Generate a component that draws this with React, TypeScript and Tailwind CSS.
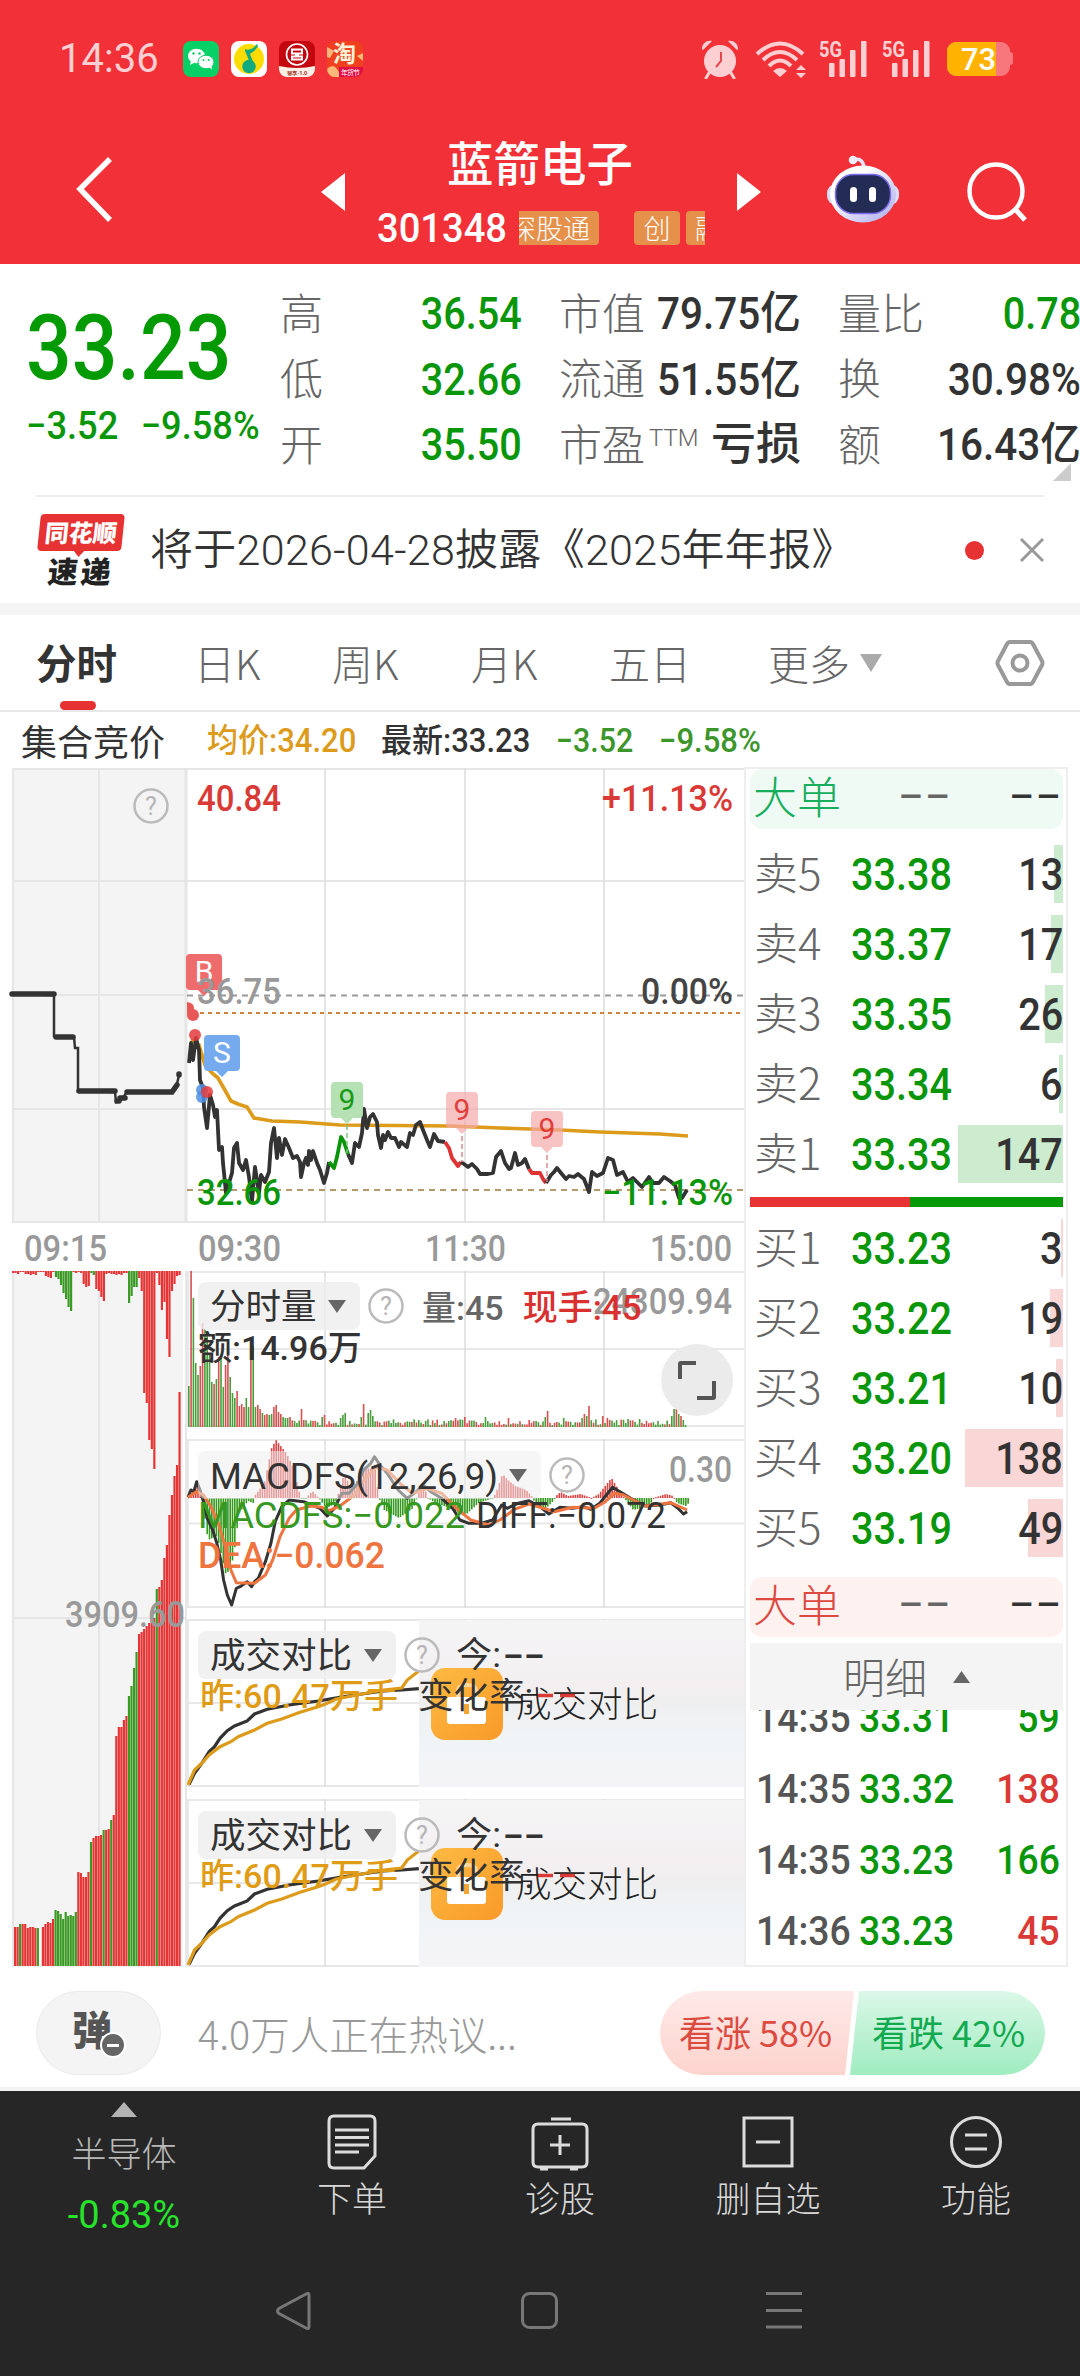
import React, { ReactNode } from 'react';
import clsx from 'clsx';

type Point = [number, number];

// DIN-like numerals, each use narrows them with its own scale-x
const NUM = 'font-["Roboto","Noto_Sans_CJK_SC",sans-serif] font-medium whitespace-nowrap';

const GREEN = '#0a960a';
const RED = '#e03434';
const INK = '#333333';

const GRID_X = [325, 465, 604];

function toPoints(points: Point[], x0: number, y0: number, sx: number, sy: number) {
  return points.map(([x, y]) => `${(x0 + x / sx).toFixed(1)},${(y0 + y / sy).toFixed(1)}`).join(' ');
}

function lerp(points: Point[], x: number) {
  for (let i = 1; i < points.length; i++) {
    const [x1, y1] = points[i];
    const [x0, y0] = points[i - 1];
    if (x <= x1) return y0 + ((y1 - y0) * (x - x0)) / (x1 - x0);
  }
  return 0;
}

function Label({ x, y, w, size = 36, fill, weight = 500, children }: {
  x: number; y: number; w: number; size?: number; fill: string; weight?: number; children: ReactNode;
}) {
  return (
    <text
      x={x}
      y={y}
      textLength={w}
      lengthAdjust="spacingAndGlyphs"
      fontSize={size}
      fontWeight={weight}
      fill={fill}
      fontFamily="Roboto, 'Noto Sans CJK SC', sans-serif"
    >
      {children}
    </text>
  );
}

/* ---------- header ---------- */

function SignalIcon() {
  return (
    <svg width="49" height="38" viewBox="0 0 49 38" fill="#fcd0d2">
      <text x="0" y="17" fontSize="22" fontWeight="700" textLength="23" lengthAdjust="spacingAndGlyphs" fontFamily="Roboto, sans-serif">5G</text>
      <rect x="10" y="23" width="5.5" height="14" rx="1" />
      <rect x="20.500" y="19" width="5.500" height="18" rx="1" />
      <rect x="31" y="10" width="5.500" height="27" rx="1" />
      <rect x="42" y="1" width="5.500" height="36" rx="1" />
    </svg>
  );
}

function StatusBar() {
  return (
    <div className="flex h-[118px] items-center pl-[59px] pr-[67px]">
      <span className='w-[124px] font-["Roboto",sans-serif] text-[40px] leading-none text-[#fcd0d2]'>14:36</span>
      <div className="flex gap-3">
        <svg width="36" height="36" viewBox="0 0 36 36">
          <rect width="36" height="36" rx="8" fill="#07d066" />
          <ellipse cx="13.500" cy="15" rx="8.500" ry="7.300" fill="#fff" />
          <path d="M8 20l-1 4 4-2z" fill="#fff" />
          <ellipse cx="23" cy="21" rx="8" ry="6.800" fill="#fff" stroke="#07d066" strokeWidth="1" />
          <path d="M26 26l3 2.500-.5-4z" fill="#fff" />
          <g fill="#07d066">
            <circle cx="10.500" cy="12.500" r="1.200" />
            <circle cx="16.500" cy="12.500" r="1.200" />
            <circle cx="20.500" cy="19" r="1" />
            <circle cx="25.700" cy="19" r="1" />
          </g>
        </svg>
        <svg width="36" height="36" viewBox="0 0 36 36">
          <rect width="36" height="36" rx="8" fill="#fff" />
          <circle cx="18" cy="18" r="15" fill="#ffdc00" />
          <path d="M14 8c3 2 8 0 12-5l1 2c-2 4-5 6-8 8l4 10-3 1-6-14z" fill="#12ab7f" />
          <circle cx="18" cy="25.500" r="6.800" fill="#12ab7f" />
        </svg>
        <svg width="36" height="36" viewBox="0 0 36 36">
          <rect width="36" height="36" rx="8" fill="#c4060f" />
          <path d="M0 25q18 4 36 0v3a8 8 0 0 1-8 8H8a8 8 0 0 1-8-8z" fill="#fdeee6" />
          <circle cx="18" cy="13.500" r="10.500" fill="none" stroke="#fff" strokeWidth="1.600" />
          <path d="M12 8.500h12M12 18.500h12M13 8.500v4h4v3h-4v3M23 8.500v4h-4v3h4v3" fill="none" stroke="#fff" strokeWidth="2" />
          <text x="8" y="33.500" fontSize="5" fontWeight="700" fill="#a3392c" textLength="20" lengthAdjust="spacingAndGlyphs">智享·1.0</text>
        </svg>
        <svg width="36" height="36" viewBox="0 0 36 36">
          <rect width="36" height="36" rx="8" fill="#f0401f" />
          <path d="M0 6l7 4-4 7-3-1zM36 12l-6 3 6 5zM0 28q6-6 10 0t4 8H8a8 8 0 0 1-8-8z" fill="#ffb878" />
          <text x="6" y="21" fontSize="23" fontWeight="700" fill="#fff2d8" fontFamily="'Noto Sans CJK SC', sans-serif">淘</text>
          <path d="M12 26h24v2a8 8 0 0 1-8 8H12z" fill="#e20b45" />
          <text x="14" y="33.500" fontSize="7" fill="#fff" textLength="19" fontFamily="'Noto Sans CJK SC', sans-serif">年货节</text>
        </svg>
      </div>

      <div className="ml-auto flex items-center">
        <svg width="38" height="40" viewBox="0 0 38 40" fill="#fcd0d2" className="mr-4">
          <circle cx="19" cy="22" r="16" />
          <path d="M8 34l-3 5M30 34l3 5" stroke="#fcd0d2" strokeWidth="3" strokeLinecap="round" />
          <path d="M1 10C1 4 6 1 11 2L2 11zM37 10C37 4 32 1 27 2l9 9z" />
          <path d="M20 13v9l-5 6" fill="none" stroke="#e8464d" strokeWidth="2" />
        </svg>
        <svg width="52" height="40" viewBox="0 0 52 40" className="mr-3">
          <g fill="none" stroke="#fcd0d2" strokeWidth="4">
            <path d="M2 15Q25-6 48 15" />
            <path d="M8 21Q25 5 42 21" />
            <path d="M14 27Q25 16 36 27" />
          </g>
          <path d="M18 32q7-6 14 0l-7 6z" fill="#fcd0d2" />
          <path d="M41 31l5-5 5 5zM41 34l5 5 5-5z" fill="#fcd0d2" />
        </svg>
        <SignalIcon />
        <span className="w-[14px]" />
        <SignalIcon />
        <svg width="66" height="34" viewBox="0 0 66 34" className="ml-4">
          <path d="M60 10h3q3 0 3 3v7q0 3-3 3h-3z" fill="#f7777d" />
          <rect width="63" height="34" rx="9" fill="#f7777d" />
          <path d="M9 0h40v34H9a9 9 0 0 1-9-9V9a9 9 0 0 1 9-9z" fill="#ffb300" />
          <text x="14" y="28" fontSize="31" fontWeight="500" fill="#fff" textLength="35" lengthAdjust="spacingAndGlyphs" fontFamily="Roboto, sans-serif">73</text>
        </svg>
      </div>
    </div>
  );
}

function Header() {
  return (
    <header className="h-[264px] bg-[#f13037]">
      <StatusBar />
      <div className="flex h-[146px] items-start text-white">
        <svg width="50" height="70" viewBox="0 0 50 70" className="ml-[70px] mt-9 shrink-0">
          <path d="M40 5L10 35l30 31" fill="none" stroke="#fff" strokeWidth="5.500" />
        </svg>
        <svg width="24" height="38" viewBox="0 0 24 38" className="ml-[201px] mt-[55px] shrink-0">
          <path d="M24 0v38L0 19z" fill="#fff" />
        </svg>
        <div className="mx-8 mt-[18px] w-[328px] shrink-0">
          <h1 className='-ml-[2px] text-center font-["Noto_Sans_CJK_SC",sans-serif] text-[46.500px] leading-[50px] font-medium'>蓝箭电子</h1>
          <div className="mt-[22px] flex h-[40px] items-center">
            <span className={clsx(NUM, 'w-[142px] shrink-0 origin-left scale-x-[0.93] text-[41px] leading-none')}>301348</span>
            <div className='flex h-[34px] w-[187px] overflow-hidden font-["Noto_Sans_CJK_SC",sans-serif] text-[27px] leading-[33px] font-light'>
              <span className="flex w-[80px] shrink-0 justify-end rounded-r bg-[#e5904b] pr-[9px] whitespace-nowrap">深股通</span>
              <span className="ml-[35px] w-[46px] shrink-0 rounded bg-[#e5904b] text-center">创</span>
              <span className="ml-[6px] w-[46px] shrink-0 rounded bg-[#e5904b] pl-[9px]">融</span>
            </div>
          </div>
        </div>
        <svg width="24" height="38" viewBox="0 0 24 38" className="mt-[55px] shrink-0">
          <path d="M0 0v38l24-19z" fill="#fff" />
        </svg>
        <svg width="74" height="68" viewBox="0 0 74 68" className="ml-[65px] mt-[37px] shrink-0">
          <defs>
            <linearGradient id="shell" x1="0" y1="0" x2="1" y2="1">
              <stop offset="0.300" stopColor="#fff" />
              <stop offset="1" stopColor="#a9a9ec" />
            </linearGradient>
          </defs>
          <path d="M27 5Q37 2 38 13" fill="none" stroke="#e9e6fb" strokeWidth="3.500" />
          <circle cx="27" cy="5" r="4.300" fill="#efeefc" />
          <rect x="1" y="29" width="72" height="21" rx="9" fill="#dcdcf8" />
          <ellipse cx="37" cy="39" rx="33" ry="28.500" fill="url(#shell)" />
          <rect x="9.500" y="19.500" width="55" height="39" rx="18" fill="#222c54" stroke="#7d6cf0" strokeWidth="1.500" />
          <rect x="24" y="32" width="7" height="15" rx="3.500" fill="#fff" />
          <rect x="43" y="32" width="7" height="15" rx="3.500" fill="#fff" />
        </svg>
        <svg width="64" height="64" viewBox="0 0 64 64" className="ml-[65px] mt-[42px] shrink-0" fill="none" stroke="#fff" strokeWidth="4.500">
          <circle cx="31" cy="31" r="26.500" />
          <path d="M50 49l10 11" strokeWidth="5" />
        </svg>
      </div>
    </header>
  );
}

/* ---------- quote ---------- */

function Quote() {
  const columns = [
    { cls: 'ml-[20px] w-[242px]', rows: [['高', '36.54', true], ['低', '32.66', true], ['开', '35.50', true]] },
    { cls: 'ml-[37px] w-[242px]', rows: [['市值', '79.75亿', false], ['流通', '51.55亿', false], ['市盈', '亏损', false]] },
    { cls: 'ml-[37px] w-[243px]', rows: [['量比', '0.78', true], ['换', '30.98%', false], ['额', '16.43亿', false]] },
  ] as const;

  return (
    <section className="relative flex h-[231px] pt-[17px]">
      <div className="w-[260px] shrink-0 pl-[26px] pt-[29px] text-[#0a960a]">
        <div className={clsx(NUM, 'origin-left scale-x-[0.885] text-[91px] leading-[76px] text-[#039a03]')}>33.23</div>
        <div className={clsx(NUM, 'mt-[16px] flex origin-left scale-x-[0.93] gap-[24px] text-[39px] leading-[48px]')}>
          <span>−3.52</span>
          <span>−9.58%</span>
        </div>
      </div>
      {columns.map(col => (
        <div key={col.cls} className={clsx('shrink-0', col.cls)}>
          {col.rows.map(([label, value, green]) => (
            <div key={label} className="flex h-[65.5px] items-center justify-between">
              <span className='flex shrink-0 pb-[5px] font-["Noto_Sans_CJK_SC",sans-serif] text-[43px] leading-none font-light whitespace-nowrap text-[#666]'>
                {label}
                {label === '市盈' && (
                  <sup className='top-0 mt-[5px] ml-[4px] font-["Roboto",sans-serif] text-[24px] leading-none'>TTM</sup>
                )}
              </span>
              <span
                className={clsx(
                  NUM,
                  'text-[45px] leading-none',
                  value.endsWith('亿') && '-ml-6 origin-right scale-x-[0.9]',
                  /\d$/.test(value) && 'origin-right scale-x-[0.88]',
                  value.endsWith('%') && 'origin-right scale-x-[0.9]',
                  green ? 'text-[#0a960a]' : 'text-[#333]',
                )}
              >
                {value}
              </span>
            </div>
          ))}
        </div>
      ))}
      <svg width="18" height="18" className="absolute left-[1053px] top-[199px]">
        <path d="M18 0v18H0z" fill="#ccc" />
      </svg>
    </section>
  );
}

function Notice() {
  return (
    <section className="mx-9 flex h-[108px] items-center border-t-2 border-[#eee]">
      <div className='ml-[3px] w-[84px] shrink-0 font-["Noto_Sans_CJK_SC",sans-serif] font-black'>
        <div className="relative h-[37px] -skew-x-6 rounded bg-[#e63232] text-center text-[24px] leading-[36px] text-white">
          同花顺
          <svg width="12" height="7" className="absolute left-[36px] top-[36px]">
            <path d="M0 0h12l-6 7z" fill="#e63232" />
          </svg>
        </div>
        <div className="mt-[4px] h-[32px] -skew-x-6 text-center text-[30px] leading-[30px] tracking-[3px] text-[#222]">速递</div>
      </div>
      <p className='ml-[27px] flex-1 font-["Roboto","Noto_Sans_CJK_SC",sans-serif] text-[43px] font-[350] tracking-[0.3px] whitespace-nowrap text-[#333]'>将于2026-04-28披露《2025年年报》</p>
      <span className="h-[19px] w-[19px] rounded-full bg-[#e63232]" />
      <svg width="26" height="26" viewBox="0 0 26 26" className="-mr-[1px] ml-[35px] shrink-0" stroke="#999" strokeWidth="3">
        <path d="M2 2l22 22M24 2L2 24" />
      </svg>
    </section>
  );
}

function Tabs() {
  const tabs = [
    { label: '日K', cls: 'ml-[76px] w-[62px]' },
    { label: '周K', cls: 'ml-[76px] w-[66px]' },
    { label: '月K', cls: 'ml-[73px] w-[66px]' },
    { label: '五日', cls: 'ml-[72px] w-[80px]' },
    { label: '更多', cls: 'ml-[79px] w-[80px]' },
  ];
  return (
    <nav className='flex h-[97px] border-b-2 border-[#e8e8e8] pl-9 font-["Noto_Sans_CJK_SC",sans-serif] text-[41px] leading-[94px] font-light text-[#666]'>
      <div className="relative w-[82px] text-[40.500px] font-bold text-[#333]">
        分时
        <span className="absolute bottom-0 left-[24px] h-[9px] w-[36px] rounded-full bg-[#e63232]" />
      </div>
      {tabs.map(tab => (
        <div key={tab.label} className={clsx('whitespace-nowrap', tab.cls)}>{tab.label}</div>
      ))}
      <svg width="22" height="18" className="mt-[39px] ml-[12px]">
        <path d="M0 0h22L11 18z" fill="#aaa" />
      </svg>
      <svg width="50" height="48" viewBox="0 0 50 48" className="mt-[24px] ml-[113px]" fill="none" stroke="#999" strokeWidth="4">
        <path d="M15 3h20q2 0 3 2l9 17q1 2 0 4l-9 17q-1 2-3 2H15q-2 0-3-2L3 26q-1-2 0-4l9-17q1-2 3-2z" />
        <circle cx="25" cy="24" r="7.500" />
      </svg>
    </nav>
  );
}

function InfoLine() {
  return (
    <div className='flex h-[55px] items-center pt-[2px] pl-[21px] font-["Noto_Sans_CJK_SC",sans-serif] text-[#333]'>
      <span className="w-[186px] pb-[2px] text-[36px] leading-none">集合竞价</span>
      <span className={clsx(NUM, 'w-[174px] origin-left scale-x-[0.94] text-[33px] leading-none text-[#dd9b1c]')}>均价:34.20</span>
      <span className={clsx(NUM, 'w-[175px] origin-left scale-x-[0.94] text-[33px] leading-none')}>最新:33.23</span>
      <span className={clsx(NUM, 'w-[103px] origin-left scale-x-[0.92] text-[33px] leading-none text-[#3c962c]')}>−3.52</span>
      <span className={clsx(NUM, 'origin-left scale-x-[0.94] text-[33px] leading-none text-[#3c962c]')}>−9.58%</span>
    </div>
  );
}

/* ---------- charts ---------- */

const PRE_LINE: Point[] = [
  [10, 994], [54, 995], [54, 1036], [74, 1037], [75, 1048], [78, 1048], [78, 1091], [115, 1092], [116, 1102],
  [122, 1099], [127, 1092], [172, 1091], [177, 1084], [179, 1075],
];

const AVG_LINE: Point[] = [
  [191, 1040], [199, 1045], [205, 1065], [212, 1073], [218, 1078], [226, 1092], [231, 1101], [238, 1104], [247, 1107],
  [254, 1118], [272, 1121], [300, 1122], [340, 1125], [450, 1126], [500, 1128], [560, 1130], [600, 1132], [660, 1134], [688, 1136],
];

const PRICE_PARTS: { color: string; points: Point[] }[] = [
  {
    color: INK,
    points: [
      [189, 1063], [191, 1043], [193, 1060], [196, 1038], [199, 1050], [200, 1080], [203, 1088], [204, 1107], [207, 1128],
      [210, 1095], [213, 1105], [215, 1117], [217, 1110], [219, 1150], [222, 1147], [223, 1163], [226, 1193], [232, 1173],
      [234, 1148], [237, 1143], [239, 1163], [243, 1170], [246, 1160], [249, 1177], [252, 1201], [255, 1167], [259, 1193],
      [261, 1175], [265, 1182], [269, 1172], [271, 1143], [274, 1128], [277, 1158], [279, 1138], [282, 1155], [285, 1139],
      [289, 1148], [293, 1158], [297, 1156], [300, 1162], [301, 1177], [304, 1163], [306, 1158], [308, 1165], [309, 1151],
      [311, 1160], [313, 1151], [317, 1163], [320, 1170], [324, 1183], [327, 1173], [329, 1162],
    ],
  },
  { color: GREEN, points: [[329, 1162], [334, 1168], [337, 1157], [341, 1137], [344, 1142], [348, 1154]] },
  {
    color: INK,
    points: [
      [348, 1154], [352, 1163], [355, 1143], [359, 1147], [362, 1133], [364, 1109], [367, 1128], [370, 1117], [373, 1114],
      [377, 1122], [378, 1135], [381, 1148], [383, 1135], [385, 1140], [388, 1132], [391, 1138], [395, 1138], [399, 1147],
      [401, 1142], [407, 1147], [410, 1133], [413, 1135], [416, 1125], [420, 1122], [423, 1130], [427, 1140], [430, 1147],
      [434, 1134], [438, 1141], [445, 1142],
    ],
  },
  { color: RED, points: [[445, 1142], [449, 1148], [452, 1158], [458, 1166], [461, 1162]] },
  {
    color: INK,
    points: [
      [461, 1162], [464, 1164], [468, 1167], [472, 1164], [477, 1169], [480, 1174], [488, 1174], [493, 1173], [496, 1157],
      [501, 1151], [505, 1163], [509, 1169], [511, 1168], [515, 1153], [518, 1165], [522, 1163], [525, 1159], [529, 1169],
    ],
  },
  { color: RED, points: [[529, 1169], [532, 1173], [540, 1173], [543, 1179], [546, 1183]] },
  {
    color: INK,
    points: [
      [546, 1183], [551, 1175], [554, 1172], [557, 1168], [561, 1173], [566, 1179], [569, 1176], [574, 1177], [578, 1174],
      [584, 1179], [589, 1192], [592, 1172], [597, 1176], [603, 1173], [608, 1158], [613, 1160], [617, 1175], [623, 1172],
      [628, 1182], [633, 1178], [642, 1187], [649, 1177], [653, 1183], [659, 1183], [664, 1177], [670, 1181], [675, 1185],
      [679, 1198], [682, 1198], [687, 1190],
    ],
  },
];

function Marker({ x, y, w, text, fill, color }: { x: number; y: number; w: number; text: string; fill: string; color: string }) {
  const cx = x + w / 2;
  return (
    <g>
      <path
        d={`M${x + 4} ${y}h${w - 8}q4 0 4 4v28q0 4-4 4H${cx + 6}l-6 6-6-6H${x + 4}q-4 0-4-4v-28q0-4 4-4z`}
        fill={fill}
      />
      <text x={cx} y={y + 28} textAnchor="middle" fontSize="30" fill={color} fontFamily="Roboto, sans-serif">{text}</text>
    </g>
  );
}

function QuestionMark({ cx, cy }: { cx: number; cy: number }) {
  return (
    <g>
      <circle cx={cx} cy={cy} r="16.500" fill="none" stroke="#bbb" strokeWidth="2.500" />
      <text x={cx} y={cy + 9} textAnchor="middle" fontSize="25" fill="#b5b5b5" fontFamily="Roboto, sans-serif">?</text>
    </g>
  );
}

function PriceChart() {
  return (
    <svg width="744" height="504" viewBox="0 767 744 504" className="block">
      <rect x="12" y="768" width="174" height="454" fill="#f4f4f4" />
      <g stroke="#e6e6e6" strokeWidth="2">
        <path d="M12 769H744M12 881H744M12 1109H744M12 1222H744M13 768V1222M99 768V1222M12 995H186" />
        <path d="M186 768V1222" strokeWidth="3" />
        {GRID_X.map(x => <path key={x} d={`M${x} 768V1222`} stroke="#ddd" strokeWidth="1.500" />)}
      </g>
      <QuestionMark cx={151} cy={806} />
      <Label x={197} y={811} w={84} fill="#d93a36">40.84</Label>
      <Label x={602} y={811} w={131} fill="#d93a36">+11.13%</Label>

      <polyline points={toPoints(PRE_LINE, 0, 0, 1, 1)} fill="none" stroke={INK} strokeWidth="2.500" />
      <g stroke={INK} strokeWidth="5.500" strokeLinecap="round">
        <path d="M12 994H54M56 1037H73M79 1091H115M117 1101H119M120 1098H125M127 1092H172L177 1085M179 1074V1075" fill="none" />
      </g>

      <path d="M187 995.500H744" stroke="#999" strokeWidth="2" strokeDasharray="6 5" />
      <path d="M200 1013H744" stroke="#d4823a" strokeWidth="2" strokeDasharray="4 4" />
      <path d="M187 1190H744" stroke="#b79a6c" strokeWidth="2" strokeDasharray="6 5" />

      <polyline points={toPoints(AVG_LINE, 0, 0, 1, 1)} fill="none" stroke="#dd9b1c" strokeWidth="3.600" />
      {PRICE_PARTS.map((part, i) => (
        <polyline key={i} points={toPoints(part.points, 0, 0, 1, 1)} fill="none" stroke={part.color} strokeWidth="3.800" strokeLinejoin="round" />
      ))}

      <Marker x={186} y={954} w={36} text="B" fill="#ee6c6c" color="#fff" />
      <Marker x={204} y={1035} w={36} text="S" fill="#75abee" color="#fff" />
      <g opacity="0.950">
        <Marker x={331} y={1082} w={32} text="9" fill="#b2e0b1" color="#0a960a" />
        <Marker x={446} y={1092} w={32} text="9" fill="#f5a9a9bb" color="#e03434" />
        <Marker x={531} y={1111} w={32} text="9" fill="#f5a9a9bb" color="#e03434" />
      </g>
      <path d="M347 1125V1153" stroke="#7fc47f" strokeWidth="1.500" strokeDasharray="5 3" />
      <path d="M462 1136V1162M547 1155V1182" stroke="#dc8c8c" strokeWidth="1.500" strokeDasharray="5 3" />
      <g fill="#e63c3c" opacity="0.850">
        <path d="M187 1002q7 1 7 6t-7 6z" />
        <circle cx="193" cy="1015" r="6" />
        <circle cx="195" cy="1035" r="6" />
      </g>
      <circle cx="202" cy="1090" r="6" fill="#4f8fe6" opacity="0.850" />
      <circle cx="202" cy="1097" r="6" fill="#4f8fe6" opacity="0.850" />
      <circle cx="207" cy="1092" r="6" fill="#e63c3c" opacity="0.850" />

      <Label x={197} y={1004} w={84} fill="#999">36.75</Label>
      <Label x={641} y={1004} w={92} fill="#444">0.00%</Label>
      <Label x={197} y={1205} w={84} fill={GREEN}>32.66</Label>
      <Label x={602} y={1205} w={131} fill={GREEN}>−11.13%</Label>

      <Label x={24} y={1261} w={83} fill="#999">09:15</Label>
      <Label x={198} y={1261} w={83} fill="#999">09:30</Label>
      <Label x={425} y={1261} w={81} fill="#999">11:30</Label>
      <Label x={650} y={1261} w={82} fill="#999">15:00</Label>
    </svg>
  );
}

// "r"/"g" runs of unmatched volume before the open, in px
const AUCTION_TOP: [string, number[]][] = [
  ['r', [2, 2, 3, 1, 1, 3, 3, 4, 3, 4]],
  ['r', [1, 1, 1, 5, 6, 7, 1]],
  ['g', [6, 8, 14, 22, 28, 36, 40]],
  ['r', [1, 2, 1, 2, 13, 16, 15]],
  ['g', [2, 4]],
  ['r', [18, 20, 26, 30, 3, 2, 3, 3, 4, 3, 4, 2, 2]],
  ['g', [32, 25, 16, 16]],
  ['r', [7, 20, 122, 132, 169, 178, 198, 2, 14, 39, 31, 68, 86, 20, 13, 5, 4]],
];

const AUCTION_BOTTOM: [string, number[]][] = [
  ['r', [39, 39]],
  ['g', [42]],
  ['r', [42, 42, 38, 39, 39, 38]],
  ['g', [38, 0]],
  ['r', [39, 42, 44, 43, 47]],
  ['g', [56, 55, 52, 47, 54, 50, 51, 50, 54]],
  ['r', [94, 93, 89, 89, 94]],
  ['g', [124]],
  ['r', [128, 130, 130, 131]],
  ['g', [136]],
  ['r', [136, 137]],
  ['g', [146]],
  ['r', [151, 230, 239, 239, 246, 250]],
  ['g', [270, 280, 298, 314]],
  ['r', [332, 334, 337, 340, 343, 346, 348]],
  ['g', [377]],
  ['r', [379, 386, 408, 421, 451, 471, 490, 501, 574]],
];

function expand(runs: [string, number[]][]) {
  return runs.flatMap(([kind, values]) => values.map(v => ({ color: kind === 'r' ? '#e63434' : '#3a9a24', v })));
}

function AuctionVolume() {
  const top = expand(AUCTION_TOP);
  const bottom = expand(AUCTION_BOTTOM);
  const stepTop = 169 / top.length;
  const stepBottom = 167 / bottom.length;
  return (
    <svg width="187" height="696" viewBox="0 1271 187 696" className="block shrink-0">
      <rect x="12" y="1271" width="171" height="696" fill="#f4f4f4" />
      <path d="M13 1271V1967M99 1271V1967M12 1618H186M186 1271V1967" stroke="#e6e6e6" strokeWidth="2" />
      {top.map((bar, i) => (
        <rect key={i} x={12 + i * stepTop} y="1271" width={stepTop - 0.35} height={bar.v} fill={bar.color} />
      ))}
      {bottom.map((bar, i) => (
        <rect key={i} x={14 + i * stepBottom} y={1966 - bar.v} width={stepBottom - 0.35} height={bar.v} fill={bar.color} />
      ))}
      <Label x={65} y={1627} w={120} fill="#999999">3909.60</Label>
    </svg>
  );
}

function PanelGrid({ h }: { h: number }) {
  return (
    <g stroke="#e8e8e8" strokeWidth="2">
      <path d={`M0 1H557M0 ${h / 2}H557M0 ${h - 1}H557M1 0V${h}`} />
      {GRID_X.map(x => <path key={x} d={`M${x - 187} 0V${h}`} stroke="#ddd" strokeWidth="1.500" />)}
    </g>
  );
}

function PanelSelect({ label, cls }: { label: string; cls: string }) {
  return (
    <div className={clsx('flex h-[48px] items-center justify-between rounded-lg bg-[#eeeeeecc] pl-[12px] pr-[14px] font-["Roboto","Noto_Sans_CJK_SC",sans-serif] text-[35.5px] leading-none whitespace-nowrap text-[#333]', cls)}>
      <span className="pt-[4px]">{label}</span>
      <svg width="18" height="13">
        <path d="M0 0h18L9 13z" fill="#666" />
      </svg>
    </div>
  );
}

function HelpIcon({ className }: { className?: string }) {
  return (
    <svg width="36" height="36" className={clsx('shrink-0', className)}>
      <QuestionMark cx={18} cy={18} />
    </svg>
  );
}

// first half hour is traded heavily, the rest of the day stays thin
const VOLUME_OPEN = [
  41, 156, 129, 64, 52, 61, 104, 98, 93, 73, 45, 43, 48, 70, 73, 40, 62, 80, 50, 34, 29, 36, 21, 23, 20, 29, 20,
  78, 81, 20, 22, 18, 14, 12, 13, 12, 13, 20, 22, 15, 13, 10, 9, 9, 10,
];
const VOLUME_OPEN_COLORS = 'grgggrrggggrgrggrrgggrrrrggrggrrgrrggrrrrggg';
const VOLUME_PEAKS: Record<number, number> = {
  49: 18, 58: 10, 59: 12, 66: 9, 67: 12, 68: 14, 75: 10, 76: 23, 78: 14, 79: 17, 80: 11, 100: 7, 116: 9, 120: 10,
  129: 10, 139: 9, 155: 10, 156: 16, 163: 9, 171: 9, 172: 13, 173: 11, 174: 21, 180: 11, 182: 9, 191: 8, 196: 8,
  210: 11, 211: 18, 212: 18, 213: 13, 214: 11, 215: 7, 216: 2,
};

function VolumeBars() {
  const bars = [];
  for (let i = 0; i < 217; i++) {
    const noise = (i * 37 + ((i * i) % 23) * 11) % 29;
    const v = VOLUME_OPEN[i] ?? VOLUME_PEAKS[i] ?? 2 + noise / 5;
    const green = VOLUME_OPEN_COLORS[i] ? VOLUME_OPEN_COLORS[i] === 'g' : noise % 2 === 0;
    bars.push(
      <rect key={i} x={1 + i * 2.3} y={156 - v} width="1.600" height={v} fill={green ? '#489e3b' : '#d94f4f'} />,
    );
  }
  return <g>{bars}</g>;
}

function VolumePanel() {
  return (
    <div className="relative h-[156px]">
      <svg width="557" height="156" className="block">
        <PanelGrid h={156} />
        <VolumeBars />
        <Label x={406} y={43} w={139} fill="#999">24309.94</Label>
      </svg>
      <div className="absolute inset-0 pl-[11px] pt-[11px]">
        <div className="flex h-[48px] items-center">
          <PanelSelect label="分时量" cls="w-[162px]" />
          <HelpIcon className="ml-[8px]" />
          <span className={clsx(NUM, 'ml-[18px] pt-[4px] text-[34px] leading-none text-[#666]')}>量:45</span>
          <span className={clsx(NUM, 'ml-[19px] pt-[4px] text-[35px] leading-none text-[#d93030]')}>现手:45</span>
        </div>
        <div className={clsx(NUM, 'text-[34px] leading-[37px] text-[#333]')}>额:14.96万</div>
      </div>
      <svg width="557" height="156" className="absolute inset-0">
        <circle cx="510" cy="109" r="36" fill="#ebebeb" />
        <path d="M493 108V93q0-1 1-1h15M527 110v16q0 1-1 1h-16" fill="none" stroke="#555" strokeWidth="4" />
      </svg>
    </div>
  );
}

const MACD_BARS: Point[] = [
  [20, 0], [35, 8], [45, 14], [55, 3], [60, -5], [75, -42], [100, -38], [125, -78], [145, -60], [160, -15], [185, -3],
  [200, -5], [205, 3], [230, 15], [250, 50], [262, 58], [290, 45], [310, 30], [330, 0], [345, 0], [362, 7], [380, 0],
  [400, -10], [425, -6], [440, 12], [450, 25], [465, 12], [480, 15], [510, 30], [535, 28], [545, 0], [560, -12],
  [600, -20], [640, -10], [655, 5], [665, 16], [680, 0], [700, -5], [740, -10], [780, -18], [820, -5], [860, 0],
  [870, 8], [885, 24], [900, 18], [920, 12], [950, 8], [965, 2], [975, -5], [1000, -12], [1025, -3], [1035, 3],
  [1045, 6], [1065, 2], [1100, 4], [1130, 0], [1150, 4], [1185, 20], [1210, 5], [1220, 0], [1245, -12], [1290, -8],
  [1300, 0], [1335, 4], [1355, 2], [1365, -5], [1390, -8], [1400, -4],
];

const DIFF_LINE: Point[] = [
  [22, 712], [30, 690], [38, 695], [46, 665], [55, 690], [65, 725], [75, 775], [90, 810], [100, 845], [112, 900],
  [120, 960], [130, 1005], [142, 1035], [155, 985], [165, 980], [185, 965], [197, 980], [205, 965], [215, 955],
  [235, 905], [250, 850], [262, 785], [280, 740], [300, 720], [340, 725], [370, 738], [385, 745], [405, 768],
  [425, 745], [445, 700], [465, 700], [490, 670], [505, 630], [525, 610], [535, 590], [550, 615], [570, 640],
  [600, 690], [625, 715], [650, 695], [668, 675], [690, 695], [720, 715], [750, 745], [770, 780], [795, 790],
  [830, 790], [860, 780], [885, 735], [900, 745], [930, 730], [960, 722], [990, 740], [1015, 762], [1045, 742],
  [1080, 745], [1110, 740], [1130, 748], [1155, 730], [1190, 682], [1215, 698], [1240, 715], [1280, 738],
  [1320, 735], [1350, 728], [1370, 745], [1385, 762], [1395, 755],
];

const DEA_LINE: Point[] = [
  [22, 712], [45, 695], [65, 705], [85, 740], [105, 790], [125, 860], [140, 930], [155, 968], [205, 970], [235, 945],
  [255, 900], [275, 830], [300, 775], [320, 750], [360, 738], [390, 742], [410, 752], [440, 738], [480, 705],
  [510, 655], [540, 622], [570, 630], [610, 675], [640, 700], [680, 685], [720, 700], [760, 745], [800, 780],
  [850, 795], [880, 780], [920, 748], [960, 732], [1000, 745], [1030, 755], [1080, 742], [1140, 745], [1170, 725],
  [1195, 700], [1220, 705], [1280, 738], [1350, 728], [1395, 750],
];

function MacdPanel() {
  const bars = [];
  for (let x = 22; x < 1400; x += 6.33) {
    const v = lerp(MACD_BARS, x);
    bars.push(
      <rect key={x} x={-7 + x / 2.751} y={v > 0 ? 59 - v : 59} width="1.600" height={Math.max(Math.abs(v), 1)} fill={v > 0 ? '#dc4040' : '#35991f'} />,
    );
  }
  return (
    <div className="relative h-[169px]">
      <svg width="557" height="169" className="block">
        <PanelGrid h={169} />
        {bars}
        <polyline points={toPoints(DIFF_LINE, -7, -179, 2.751, 3)} fill="none" stroke={INK} strokeWidth="3" strokeLinejoin="round" />
        <polyline points={toPoints(DEA_LINE, -7, -179, 2.751, 3)} fill="none" stroke="#ee7440" strokeWidth="3" strokeLinejoin="round" />
      </svg>
      <div className="absolute inset-0 pl-[11px] pt-[12px]">
        <div className="flex h-[48px] items-center">
          <div className="flex h-[48px] w-[343px] items-center justify-between rounded-lg bg-[#eeeeee88] pl-[12px] pr-[14px]">
            <svg width="290" height="44">
              <Label x={0} y={36} w={288} size={37} weight={400} fill={INK}>MACDFS(12,26,9)</Label>
            </svg>
            <svg width="18" height="13">
              <path d="M0 0h18L9 13z" fill="#666" />
            </svg>
          </div>
          <HelpIcon className="ml-[8px]" />
        </div>
      </div>
      <svg width="557" height="169" className="absolute inset-0">
        <Label x={482} y={43} w={63} fill="#999">0.30</Label>
        <Label x={11} y={89} w={267} weight={400} fill="#36981f">MACDFS:−0.022</Label>
        <Label x={289} y={89} w={190} weight={400} fill={INK}>DIFF:−0.072</Label>
        <Label x={11} y={129} w={187} fill="#ee7440">DEA:−0.062</Label>
      </svg>
    </div>
  );
}

const TODAY_CURVE: Point[] = [
  [25, 553], [40, 520], [60, 490], [80, 455], [95, 440], [110, 415], [130, 392], [150, 378], [185, 363], [205, 342],
  [240, 328], [300, 315], [340, 309], [380, 303], [440, 292], [500, 282], [560, 273], [610, 270], [657, 266],
];

const YESTERDAY_CURVE: Point[] = [
  [22, 555], [40, 510], [60, 490], [80, 465], [110, 440], [140, 425], [160, 410], [205, 390], [240, 370], [280, 357],
  [330, 337], [380, 320], [400, 312], [430, 297], [500, 282], [560, 270], [610, 264], [625, 240], [657, 213],
];

function ComparePanel() {
  return (
    <div className="relative h-[168px]">
      <svg width="557" height="168" className="block">
        <defs>
          <linearGradient id="veil" x1="0" y1="0" x2="0" y2="1">
            <stop offset="0" stopColor="#f5f5f6" />
            <stop offset="0.400" stopColor="#f3eff1" />
            <stop offset="0.500" stopColor="#efeff0" />
            <stop offset="0.700" stopColor="#f0f4f6" />
            <stop offset="1" stopColor="#f5f4f7" />
          </linearGradient>
          <linearGradient id="lock" x1="0" y1="0" x2="1" y2="1">
            <stop offset="0" stopColor="#fdba42" />
            <stop offset="1" stopColor="#f99a2a" />
          </linearGradient>
        </defs>
        <PanelGrid h={168} />
        <polyline points={toPoints(TODAY_CURVE, -7, -19, 2.751, 3)} fill="none" stroke={INK} strokeWidth="3.200" />
        <polyline points={toPoints(YESTERDAY_CURVE, -7, -19, 2.751, 3)} fill="none" stroke="#dd9b1c" strokeWidth="3.200" />
        <rect x="232" y="1" width="325" height="167" fill="url(#veil)" />
        <rect x="244" y="49" width="72" height="72" rx="14" fill="url(#lock)" />
        <path d="M271 78v-6q0-6 9-6t9 6v6" fill="none" stroke="#fff" strokeWidth="4" opacity="0.500" />
        <rect x="260" y="78" width="39" height="27" rx="3" fill="#fff" />
        <path d="M279.500 85v10" stroke="#f5a533" strokeWidth="5" />
      </svg>
      <div className="absolute inset-0 pl-[11px] pt-[12px] text-[#333]">
        <div className="flex h-[48px] items-center">
          <PanelSelect label="成交对比" cls="w-[198px]" />
          <HelpIcon className="ml-[8px]" />
        </div>
      </div>
      <svg width="557" height="168" className="absolute inset-0">
        <Label x={269} y={48} w={45} size={35} weight={400} fill={INK}>今:</Label>
        <Label x={316} y={49} w={42} size={36} fill={INK}>--</Label>
        <Label x={13} y={89} w={198} size={34} fill="#e09c17">昨:60.47万手</Label>
        <Label x={231} y={89} w={115} size={35} weight={400} fill={INK}>变化率:</Label>
        <Label x={329} y={98} w={142} size={35.5} weight={300} fill="#222">成交对比</Label>
        <path d="M351 76.500h15M373 76.500h15" stroke="#d93a36" strokeWidth="3.500" />
      </svg>
    </div>
  );
}

/* ---------- order book ---------- */

const SELLS = [
  { label: '卖5', price: '33.38', vol: 13, bar: 9 },
  { label: '卖4', price: '33.37', vol: 17, bar: 12 },
  { label: '卖3', price: '33.35', vol: 26, bar: 18 },
  { label: '卖2', price: '33.34', vol: 6, bar: 4 },
  { label: '卖1', price: '33.33', vol: 147, bar: 105 },
];

const BUYS = [
  { label: '买1', price: '33.23', vol: 3, bar: 2 },
  { label: '买2', price: '33.22', vol: 19, bar: 13 },
  { label: '买3', price: '33.21', vol: 10, bar: 7 },
  { label: '买4', price: '33.20', vol: 138, bar: 98 },
  { label: '买5', price: '33.19', vol: 49, bar: 35 },
];

const TRADES = [
  { time: '14:35', price: '33.31', vol: 59, up: false },
  { time: '14:35', price: '33.32', vol: 138, up: true },
  { time: '14:35', price: '33.23', vol: 166, up: false },
  { time: '14:36', price: '33.23', vol: 45, up: true },
];

function DepthRow({ row, side }: { row: (typeof SELLS)[number]; side: 'sell' | 'buy' }) {
  return (
    <div className="relative flex h-[70px] items-center pl-[4px]">
      <span
        className={clsx('absolute right-0 top-[6px] h-[58px]', side === 'sell' ? 'bg-[#cdebcf]' : 'bg-[#f9d7d7]')}
        style={{ width: row.bar }}
      />
      <span className='relative w-[97px] shrink-0 pb-[7px] font-["Noto_Sans_CJK_SC",sans-serif] text-[44px] leading-none font-light text-[#666]'>{row.label}</span>
      <span className={clsx(NUM, 'relative origin-left scale-x-[0.88] text-[45px] leading-none text-[#0a960a]')}>{row.price}</span>
      <span className={clsx(NUM, 'relative ml-auto origin-right scale-x-[0.88] text-[45px] leading-none text-[#333]')}>{row.vol}</span>
    </div>
  );
}

function BigOrderRow({ side }: { side: 'sell' | 'buy' }) {
  return (
    <div
      className={clsx(
        'flex h-[60px] items-center rounded-xl pl-[3px] pr-[1px] font-["Noto_Sans_CJK_SC",sans-serif] text-[44px] leading-none font-light',
        side === 'sell' ? 'bg-[#f0faf5] text-[#16ae5c]' : 'bg-[#fef2f1] text-[#dc4a42]',
      )}
    >
      <span className="pb-[9px]">大单</span>
      <span className='ml-auto pb-[5px] font-["Roboto",sans-serif] text-[47px] font-normal text-[#666]'>−−</span>
      <span className='ml-[57px] pb-[5px] font-["Roboto",sans-serif] text-[47px] font-normal text-[#333]'>−−</span>
    </div>
  );
}

function OrderBook() {
  return (
    <aside className="flex h-[1200px] w-[324px] shrink-0 flex-col border-2 border-[#eee] pl-[4px] pr-[3px]">
      <BigOrderRow side="sell" />
      <div className="mt-[10px]">
        {SELLS.map(row => <DepthRow key={row.label} row={row} side="sell" />)}
      </div>
      <div className="mt-[8px] flex h-[10px] shrink-0">
        <span className="w-[160px] bg-[#e63232]" />
        <span className="flex-1 bg-[#059905]" />
      </div>
      <div className="mt-[6px] mb-[14px]">
        {BUYS.map(row => <DepthRow key={row.label} row={row} side="buy" />)}
      </div>
      <BigOrderRow side="buy" />
      <div className='mt-[6px] flex h-[67px] shrink-0 items-center justify-center gap-[26px] bg-[#f4f4f4] font-["Noto_Sans_CJK_SC",sans-serif] text-[42px] leading-none font-light text-[#666]'>
        <span className="pb-[2px]">明细</span>
        <svg width="17" height="12">
          <path d="M0 12h17L8.500 0z" fill="#666" />
        </svg>
      </div>
      <div className="flex min-h-0 flex-1 flex-col justify-end overflow-hidden">
        {TRADES.map((trade, i) => (
          <div key={i} className={clsx(NUM, 'flex h-[71px] shrink-0 items-center pt-[3px] pl-[6px] pr-[3px] text-[41px] leading-none text-[#0a960a]')}>
            <span className="w-[103px] origin-left scale-x-[0.91] text-[#555]">{trade.time}</span>
            <span className="origin-left scale-x-[0.91]">{trade.price}</span>
            <span className={clsx('ml-auto origin-right scale-x-[0.91]', trade.up && 'text-[#d93a36]')}>{trade.vol}</span>
          </div>
        ))}
      </div>
    </aside>
  );
}

/* ---------- bottom ---------- */

function DiscussBar() {
  return (
    <section className='flex h-[120px] items-center pt-[12px] pr-[35px] pl-9 font-["Noto_Sans_CJK_SC",sans-serif]'>
      <div className="relative h-[84px] w-[125px] rounded-full border border-[#eaeaea] bg-[#f4f4f4] pl-[35px] text-[40px] leading-[72px] font-black text-[#555]">
        弹
        <span className="absolute left-[63px] top-[40px] flex h-[26px] w-[26px] items-center justify-center rounded-full border-2 border-white bg-[#666]">
          <span className="h-[3px] w-[12px] bg-white" />
        </span>
      </div>
      <span className="ml-[37px] flex-1 text-[39.500px] font-light whitespace-nowrap text-[#999]">4.0万人正在热议...</span>
      <div className="relative flex h-[84px] w-[385px] overflow-hidden rounded-full text-[36px] leading-[80px] whitespace-nowrap">
        <svg width="385" height="84" className="absolute inset-0">
          <defs>
            <linearGradient id="bull" x1="0" y1="0" x2="0" y2="1">
              <stop offset="0" stopColor="#feeae9" />
              <stop offset="1" stopColor="#fdd3cd" />
            </linearGradient>
            <linearGradient id="bear" x1="0" y1="0" x2="0" y2="1">
              <stop offset="0" stopColor="#dbf8e8" />
              <stop offset="1" stopColor="#a0ecc0" />
            </linearGradient>
          </defs>
          <path d="M0 0h194l-9 84H0z" fill="url(#bull)" />
          <path d="M199 0h186v84H190z" fill="url(#bear)" />
        </svg>
        <span className="relative w-[192px] pl-[19px] text-[#dc4a40]">看涨 58%</span>
        <span className="relative pl-[20px] text-[#13a950]">看跌 42%</span>
      </div>
    </section>
  );
}

function NavItem({ label, children, cls }: { label: string; children: ReactNode; cls: string }) {
  return (
    <div className={clsx('flex flex-col items-center', cls)}>
      <svg width="60" height="60" viewBox="0 0 60 60" fill="none" stroke="#dcdcdc" strokeWidth="3" className="mt-[20px]">
        {children}
      </svg>
      <span className="mt-[8px] leading-[36px] whitespace-nowrap">{label}</span>
    </div>
  );
}

function BottomNav() {
  return (
    <footer className="h-[285px] bg-[#262626]">
      <div className='flex h-[170px] font-["Noto_Sans_CJK_SC",sans-serif] text-[35px] font-light text-[#d8d8d8]'>
        <div className="ml-[24px] flex w-[200px] flex-col items-center">
          <svg width="26" height="15" className="mt-[11px]">
            <path d="M0 15h26L13 0z" fill="#b4b4b4" />
          </svg>
          <span className="mt-[16px] leading-[38px] text-[#b8b8b8]">半导体</span>
          <span className='mt-[25px] font-["Roboto",sans-serif] text-[38px] leading-[38px] font-normal text-[#27e32c]'>-0.83%</span>
        </div>
        <NavItem label="下单" cls="ml-[28px] w-[200px]">
          <path d="M12 5h36q5 0 5 5v35l-11 12H12q-5 0-5-5V10q0-5 5-5zM13 19h34M13 26.500h34M13 34h34M13 41h24" />
        </NavItem>
        <NavItem label="诊股" cls="w-[216px]">
          <path d="M21 8h20M9 13h43q5 0 5 5v33q0 5-5 5H8q-5 0-5-5V18q0-5 5-5zM30 24v20M20 34h20M10 58h8M40 58h8" />
        </NavItem>
        <NavItem label="删自选" cls="w-[200px]">
          <path d="M6 7h48v48H6zM18 31h24" />
        </NavItem>
        <NavItem label="功能" cls="ml-[8px] w-[200px]">
          <circle cx="30" cy="31" r="24.500" />
          <path d="M19 24h22M19 38h22" />
        </NavItem>
      </div>
      <div className="flex pt-[28px]">
        <svg width="40" height="44" viewBox="0 0 40 44" className="ml-[273px]" fill="none" stroke="#777" strokeWidth="3">
          <path d="M34 4.500q2-1 2 2v31q0 3-3 1.500L6 24.500q-3-2.500 0-5z" />
        </svg>
        <svg width="40" height="44" viewBox="0 0 40 44" className="ml-[207px]" fill="none" stroke="#777" strokeWidth="3">
          <rect x="2.500" y="4.500" width="34" height="34" rx="7" />
        </svg>
        <svg width="40" height="44" viewBox="0 0 40 44" className="ml-[204px]" fill="none" stroke="#777" strokeWidth="3">
          <path d="M2 4.500h36M2 21.500h36M2 38h36" />
        </svg>
      </div>
    </footer>
  );
}

export default function App() {
  return (
    <div className="h-[2376px] w-[1080px] overflow-hidden bg-white">
      <Header />
      <Quote />
      <Notice />
      <div className="h-[12px] bg-[#f4f4f4]" />
      <Tabs />
      <InfoLine />
      <main className="flex h-[1200px]">
        <div className="w-[744px] shrink-0">
          <PriceChart />
          <div className="flex">
            <AuctionVolume />
            <div className="w-[557px]">
              <VolumePanel />
              <div className="h-[12px]" />
              <MacdPanel />
              <div className="h-[11px]" />
              <ComparePanel />
              <div className="h-[12px]" />
              <ComparePanel />
            </div>
          </div>
        </div>
        <OrderBook />
      </main>
      <DiscussBar />
      <div className="h-[4px] bg-[#f2f2f2]" />
      <BottomNav />
    </div>
  );
}
